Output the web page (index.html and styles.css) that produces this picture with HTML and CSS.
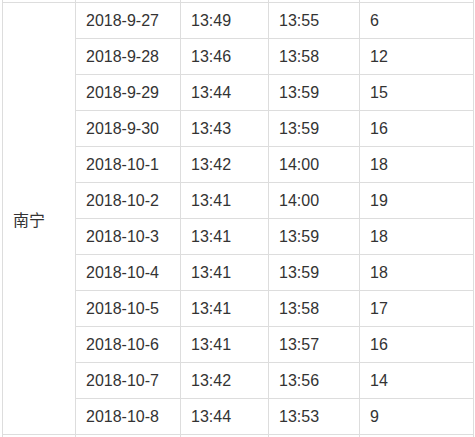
FILE: index.html
```html
<!DOCTYPE html>
<html lang="zh-CN">
<head>
<meta charset="utf-8">
<title>南宁</title>
<link rel="stylesheet" href="styles.css">
</head>
<body>
<div class="viewport">
  <table class="sun-table">
    <colgroup>
      <col class="c-city">
      <col class="c-date">
      <col class="c-time">
      <col class="c-time2">
      <col class="c-num">
    </colgroup>
    <tbody>
      <tr class="edge-row"><td></td><td></td><td></td><td></td><td></td></tr>
      <tr><td class="city" rowspan="12">南宁</td><td>2018-9-27</td><td>13:49</td><td>13:55</td><td>6</td></tr>
      <tr><td>2018-9-28</td><td>13:46</td><td>13:58</td><td>12</td></tr>
      <tr><td>2018-9-29</td><td>13:44</td><td>13:59</td><td>15</td></tr>
      <tr><td>2018-9-30</td><td>13:43</td><td>13:59</td><td>16</td></tr>
      <tr><td>2018-10-1</td><td>13:42</td><td>14:00</td><td>18</td></tr>
      <tr><td>2018-10-2</td><td>13:41</td><td>14:00</td><td>19</td></tr>
      <tr><td>2018-10-3</td><td>13:41</td><td>13:59</td><td>18</td></tr>
      <tr><td>2018-10-4</td><td>13:41</td><td>13:59</td><td>18</td></tr>
      <tr><td>2018-10-5</td><td>13:41</td><td>13:58</td><td>17</td></tr>
      <tr><td>2018-10-6</td><td>13:41</td><td>13:57</td><td>16</td></tr>
      <tr><td>2018-10-7</td><td>13:42</td><td>13:56</td><td>14</td></tr>
      <tr><td>2018-10-8</td><td>13:44</td><td>13:53</td><td>9</td></tr>
      <tr class="edge-row"><td></td><td></td><td></td><td></td><td></td></tr>
    </tbody>
  </table>
</div>
</body>
</html>
```
FILE: styles.css
```css
html, body {
  margin: 0;
  padding: 0;
  background: #fff;
}
.viewport {
  width: 475px;
  height: 437px;
  overflow: hidden;
  padding-left: 2px;
  box-sizing: border-box;
}
.sun-table {
  border-collapse: collapse;
  table-layout: fixed;
  width: 471px;
  margin-top: -34px;
  font-family: "Liberation Sans", Arial, "Noto Sans CJK SC", sans-serif;
  font-size: 16px;
  color: #333;
}
.c-city { width: 73px; }
.c-date { width: 105px; }
.c-time { width: 88px; }
.c-time2 { width: 91px; }
.c-num { width: 114px; }
.sun-table td {
  border: 1px solid #ddd;
  height: 35px;
  padding: 0 10px;
  vertical-align: middle;
  white-space: nowrap;
  box-sizing: border-box;
}
.sun-table tr {
  height: 36px;
}
.sun-table td.city {
  font-family: "Noto Sans CJK SC", "Liberation Sans", sans-serif;
  padding-left: 10px;
}
```
